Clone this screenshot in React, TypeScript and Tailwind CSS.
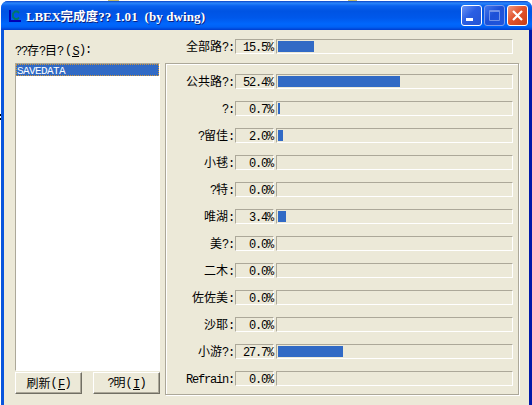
import { Fragment } from 'react';

interface Route {
  label: string;
  percent: number;
}

const total: Route = { label: '全部路?:', percent: 15.5 };

const routes: Route[] = [
  { label: '公共路?:', percent: 52.4 },
  { label: '?:', percent: 0.7 },
  { label: '?留佳:', percent: 2.0 },
  { label: '小毬:', percent: 0 },
  { label: '?特:', percent: 0 },
  { label: '唯湖:', percent: 3.4 },
  { label: '美?:', percent: 0 },
  { label: '二木:', percent: 0 },
  { label: '佐佐美:', percent: 0 },
  { label: '沙耶:', percent: 0 },
  { label: '小游?:', percent: 27.7 },
  { label: 'Refrain:', percent: 0 },
];

// Half-width characters take 6px, full-width ones 12px
function Text({ children }: { children: string }) {
  const runs = children.match(/[\x20-\x7e]+|[^\x20-\x7e]+/g) ?? [];
  return (
    <>
      {runs.map((run, i) =>
        run.charCodeAt(0) < 127 ? (
          <span key={i} className="font-['Liberation_Mono',monospace] tracking-[-1.2px]">
            {run}
          </span>
        ) : (
          <Fragment key={i}>{run}</Fragment>
        ),
      )}
    </>
  );
}

function Mnemonic({ letter }: { letter: string }) {
  return (
    <span className="flex">
      <Text>(</Text>
      <span className="ml-px h-[14px] w-[7px] border-b border-black text-center">
        <Text>{letter}</Text>
      </span>
      <Text>)</Text>
    </span>
  );
}

function RouteRow({ route }: { route: Route }) {
  return (
    <div className="flex h-[15px] shrink-0 items-stretch">
      <div className="mr-px flex flex-1 items-center justify-end">
        <span>
          <Text>{route.label}</Text>
        </span>
      </div>
      <div className="flex w-[39px] items-start justify-end border border-t-[#aca899] border-r-white border-b-white border-l-[#aca899] pt-px leading-[14px]">
        <span className="text-[12px] font-['Liberation_Mono',monospace] tracking-[-1.2px]">
          {route.percent.toFixed(1)}%
        </span>
      </div>
      <div className="ml-[2px] w-[237px] border border-t-[#aca899] border-r-white border-b-white border-l-[#aca899] p-px">
        <div className="h-full bg-[#316ac5]" style={{ width: `${route.percent}%` }} />
      </div>
    </div>
  );
}

function PushButton({ label, letter }: { label: string; letter: string }) {
  return (
    <button className="flex h-[22px] w-[67px] items-center justify-center border border-t-white border-r-[#716f64] border-b-[#716f64] border-l-white bg-[#ece9d8] shadow-[inset_-1px_-1px_0_#aca899]">
      <span>
        <Text>{label}</Text>
      </span>
      <Mnemonic letter={letter} />
    </button>
  );
}

function TitleBar() {
  return (
    <div className="flex h-[29px] shrink-0 items-center rounded-t-[7px] bg-[linear-gradient(to_bottom,#0b43c5_0,#2a86fb_2px,#0a62ee_5px,#0054e3_10px,#0058eb_17px,#0067fd_23px,#0061f5_26px,#003dce_29px)] pr-[4px] pl-[8px]">
      <svg className="h-[14px] w-[13px]" viewBox="0 0 13 14">
        <path d="M1 1v11h11" fill="none" stroke="#0000b4" strokeWidth="2" />
        <path d="M10 4L8.500 2.500H6L4 4.500V8l2 2h2.500L10 8.500" fill="none" stroke="#007868" strokeWidth="1.800" />
      </svg>
      <h1 className="ml-[4px] flex-1 pt-[2px] text-[12.500px] leading-[18px] font-bold whitespace-pre text-white [text-shadow:1px_1px_0_#0a1f80] font-['Liberation_Serif','Noto_Sans_CJK_SC',serif]">
        <span className="text-[13px] tracking-[-0.2px]">LBEX</span>完成度
        <span className="text-[13px] tracking-[0.1px]">?? 1.01&nbsp; (by dwing)</span>
      </h1>
      <div className="flex gap-[2px]">
        <button className="h-[21px] w-[21px] rounded-[3px] border border-white bg-[linear-gradient(135deg,#6b94f5,#2a5ee3_45%,#2454d4)]">
          <svg viewBox="0 0 19 19">
            <path d="M4 12h7v3H4z" fill="#fff" />
          </svg>
        </button>
        <button className="h-[21px] w-[21px] rounded-[3px] border border-[#7c9bea] bg-[linear-gradient(135deg,#4377ed,#1d50d7_45%,#1f55dd)]">
          <svg viewBox="0 0 19 19">
            <path d="M4.500 4.500h10v10h-10zM4 5.500h11" fill="none" stroke="#7293e8" />
          </svg>
        </button>
        <button className="h-[21px] w-[21px] rounded-[3px] border border-white bg-[linear-gradient(135deg,#f09a80,#e2542e_45%,#c93d15)]">
          <svg viewBox="0 0 19 19">
            <path d="M5 5l9 9M14 5l-9 9" stroke="#fff" strokeWidth="2.200" />
          </svg>
        </button>
      </div>
    </div>
  );
}

export default function App() {
  return (
    <div className="relative h-[405px] w-[532px] overflow-hidden bg-white pt-px pl-px text-[12px] leading-[14px] text-black font-['Noto_Sans_CJK_SC',sans-serif]">
      {/* Desktop showing behind the window edges */}
      <div className="absolute top-0 left-[108px] h-px w-[11px] bg-[#c9bd6a]" />
      <div className="absolute top-0 left-[348px] h-px w-[9px] bg-[#c9bd6a]" />
      <div className="absolute top-[114px] left-0 h-[6px] w-px border-y-2 border-black" />

      <div className="flex h-[404px] flex-col rounded-t-[7px] bg-[#0054e3]">
        <TitleBar />
        <div className="flex flex-1 border-r-[3px] border-l-[3px] border-r-[#0019a8] border-l-[#0855dd] bg-[#ece9d8]">
          {/* Save directories */}
          <div className="ml-[11px] flex w-[145px] flex-col">
            <div className="mt-[13px] flex h-[20px] items-start">
              <span>
                <Text>??存?目?</Text>
              </span>
              <span className="ml-[2px]">
                <Mnemonic letter="S" />
              </span>
              <Text>:</Text>
            </div>
            <div className="h-[308px] border border-t-[#aca899] border-r-white border-b-white border-l-[#aca899] bg-white">
              <div className="h-[12px] border border-dotted border-[#ce953a] bg-[#316ac5] text-[11px] leading-[12px] text-white font-['Liberation_Mono',monospace] tracking-[-0.6px]">
                SAVEDATA
              </div>
            </div>
            <div className="mt-px flex justify-between">
              <PushButton label="刷新" letter="F" />
              <PushButton label="?明" letter="I" />
            </div>
          </div>

          {/* Completion by route */}
          <div className="ml-[5px] w-[354px]">
            <div className="mt-[9px] pr-[6px]">
              <RouteRow route={total} />
            </div>
            <div className="mt-[9px] flex h-[332px] flex-col gap-[12px] border border-[#aca899] pt-[10px] pr-[5px] shadow-[1px_1px_0_#fff,inset_1px_1px_0_#fff]">
              {routes.map((route) => (
                <RouteRow key={route.label} route={route} />
              ))}
            </div>
          </div>
        </div>
      </div>
    </div>
  );
}
